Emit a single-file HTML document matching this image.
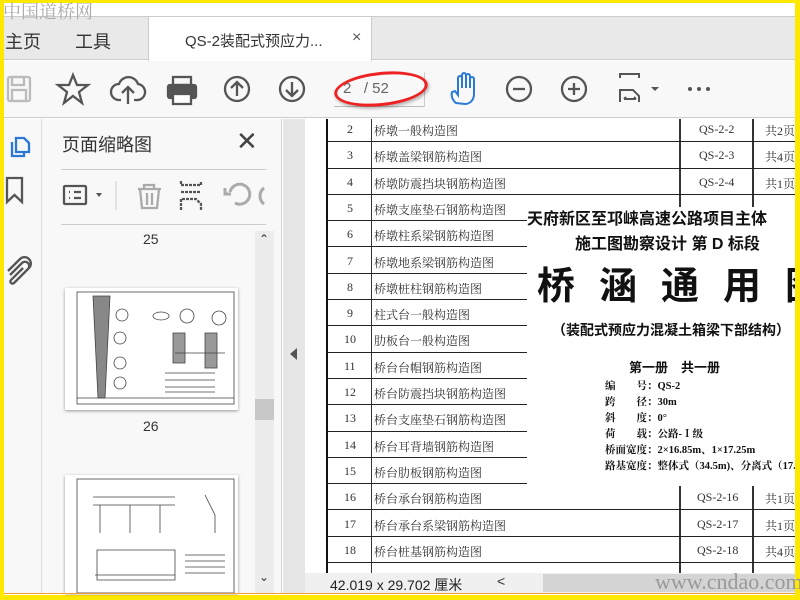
<!DOCTYPE html>
<html><head><meta charset="utf-8"><style>
*{margin:0;padding:0;box-sizing:border-box}
body{width:800px;height:600px;overflow:hidden;background:#ffe800;position:relative;font-family:"Liberation Sans","Noto Sans CJK SC",sans-serif}
.a{position:absolute}
.ico{position:absolute}
.row{position:absolute;left:327px;height:26.3px;width:468px;border-bottom:1.5px solid #222;font-family:"Liberation Serif","Noto Serif CJK SC",serif;font-size:12px;color:#333}
.row span{position:absolute;top:6px}
</style></head><body>
<div class="a" style="left:4px;top:3px;width:791px;height:592px;background:#fff"></div>
<div class="a" style="left:4px;top:16px;width:791px;height:44px;background:#e9e9e9;border-top:1px solid #ccc;border-bottom:1px solid #ccc"></div>
<div class="a" style="left:148px;top:16px;width:224px;height:45px;background:#fff;border-left:1px solid #ccc;border-right:1px solid #ccc;border-top:1px solid #ccc"></div>
<div class="a" style="left:3px;top:1px;font-size:18px;line-height:20px;color:#aaa;letter-spacing:0px;font-family:'Noto Serif CJK SC',serif;z-index:5">中国道桥网</div>
<div class="a" style="left:5px;top:28px;font-size:18px;color:#333">主页</div>
<div class="a" style="left:75px;top:28px;font-size:18px;color:#333">工具</div>
<div class="a" style="left:185px;top:30px;font-size:15px;color:#333">QS-2装配式预应力...</div>
<div class="a" style="left:352px;top:29px;font-size:16px;color:#555">×</div>
<div class="a" style="left:4px;top:61px;width:791px;height:57px;background:#f8f8f8;border-bottom:1px solid #ccc"></div>
<svg class="ico" style="left:0;top:70px" width="800" height="42" fill="none" stroke="#555" stroke-width="2.3">
<rect x="8" y="7" width="22" height="24" rx="2" stroke="#bbb"/><rect x="12" y="7" width="12" height="8" stroke="#bbb"/><rect x="12" y="20" width="14" height="11" stroke="#bbb"/>
<path d="M73 5 L77 15 L88 15 L79 22 L82 33 L73 26 L64 33 L67 22 L58 15 L69 15Z"/>
<path d="M121 30 H119 A8 8 0 0 1 119 14 A10 10 0 0 1 138 14 A8 8 0 0 1 136 30 H134 M128 34 V17 M122 23 L128 17 L134 23"/>
<rect x="168" y="15" width="28" height="13" rx="2" fill="#555"/><rect x="173" y="7" width="18" height="8" fill="none"/><rect x="173" y="24" width="18" height="10" fill="#fff"/>
<circle cx="237" cy="19" r="12"/><path d="M237 26 V12 M231 18 L237 12 L243 18"/>
<circle cx="292" cy="19" r="12"/><path d="M292 12 V26 M286 20 L292 26 L298 20"/>
<circle cx="519" cy="19" r="12"/><path d="M513 19 H525"/>
<circle cx="574" cy="19" r="12"/><path d="M568 19 H580 M574 13 V25"/>
<path d="M620 8 V4 H639 V8 M620 32 V20 H633 L639 26 V32 M624 29 H636 M624 29 L626 27 M636 29 L634 27" stroke-width="2"/>
<path d="M651 17 L659 17 L655 21Z" fill="#555" stroke="none"/>
<circle cx="690" cy="19" r="2" fill="#555" stroke="none"/><circle cx="699" cy="19" r="2" fill="#555" stroke="none"/><circle cx="708" cy="19" r="2" fill="#555" stroke="none"/>
<path d="M456 33 C452 30 451 25 452 22 L455 21 L458 25 V8 A2 2 0 0 1 462 8 V18 V5 A2 2 0 0 1 466 5 V18 V6 A2 2 0 0 1 470 6 V18 V9 A2 2 0 0 1 474 9 V24 C474 30 470 34 465 34Z" stroke="#2a7ad5" stroke-width="2"/>
</svg>
<div class="a" style="left:334px;top:106px;width:90px;height:1px;background:#bbb"></div>
<div class="a" style="left:424px;top:72px;width:1px;height:35px;background:#ccc"></div>
<div class="a" style="left:343px;top:80px;font-size:15px;color:#666">2 &nbsp; / 52</div>
<div class="a" style="left:334px;top:72px;width:94px;height:34px;border:3px solid #e22;border-radius:50%;transform:rotate(-6deg);box-shadow:1px 2px 3px rgba(0,0,0,.3)"></div>
<div class="a" style="left:4px;top:119px;width:38px;height:474px;background:#f8f8f8;border-right:1px solid #ddd"></div>
<svg class="ico" style="left:4px;top:130px" width="38" height="160" fill="none" stroke-width="2.3">
<path d="M8 12 V26 H20 V22 M12 8 H20 L25 13 V22 H12Z" stroke="#2a7ad5"/>
<path d="M3 72 V48 H18 V72 L10.5 65Z" stroke="#555"/>
<path d="M6 145 L18 133 A4 4 0 0 1 24 139 L10 153 A2 2 0 0 1 7 150 L19 138 M4 141 L16 129 A6 6 0 0 1 25 138" stroke="#555"/>
</svg>
<div class="a" style="left:42px;top:119px;width:240px;height:474px;background:#f8f8f8;border-right:1px solid #d5d5d5"></div>
<div class="a" style="left:62px;top:131px;font-size:18px;color:#333">页面缩略图</div>
<div class="a" style="left:236px;top:126px;font-size:26px;color:#444">✕</div>
<div class="a" style="left:61px;top:169px;width:205px;height:1px;background:#ccc"></div>
<div class="a" style="left:61px;top:224px;width:205px;height:1px;background:#ccc"></div>
<svg class="ico" style="left:60px;top:178px" width="210" height="36" fill="none" stroke-width="2.3">
<rect x="4" y="8" width="22" height="18" rx="1" stroke="#555"/><path d="M9 14 H10 M9 20 H10 M14 14 H21 M14 20 H21" stroke="#555"/>
<path d="M36 15 L42 15 L39 19Z" fill="#555"/><path d="M56 3 V32" stroke="#ccc" stroke-width="1"/>
<path d="M78 11 H101 M84 11 V7 H94 V11 M80 11 L82 30 H97 L99 11 M87 15 V27 M92 15 V27" stroke="#aaa"/>
<path d="M121 3 V7 H141 V3 M121 32 V21 H136 L141 26 V32 M121 14 H141" stroke="#555" stroke-dasharray="3 1"/>
<path d="M175 25 A10 10 0 1 0 170 14 M165 10 V16 H171" stroke="#aaa" stroke-width="3"/>
<path d="M204 10 A10 10 0 0 0 204 26" stroke="#aaa" stroke-width="3"/>
</svg>
<div class="a" style="left:143px;top:231px;font-size:14px;color:#333">25</div>
<div class="a" style="left:143px;top:418px;font-size:14px;color:#333">26</div>
<div class="a" style="left:65px;top:288px;width:173px;height:122px;background:#fff;box-shadow:0 1px 3px rgba(0,0,0,.4)">
<svg width="173" height="122" stroke="#444" fill="none" stroke-width=".8"><rect x="12" y="4" width="157" height="112"/><path d="M28 8 L33 110 L40 110 L45 8Z" fill="#888"/><circle cx="55" cy="50" r="6"/><circle cx="55" cy="75" r="6"/><circle cx="55" cy="95" r="6"/><circle cx="57" cy="27" r="6"/><circle cx="122" cy="28" r="7"/><circle cx="154" cy="30" r="7"/><ellipse cx="96" cy="28" rx="8" ry="4"/><rect x="108" y="45" width="12" height="30" fill="#999"/><rect x="140" y="45" width="12" height="35" fill="#999"/><path d="M110 65 H160 M100 85 H150 M100 92 H150 M100 99 H150 M100 104 H150 M12 110 H169"/></svg></div>
<div class="a" style="left:65px;top:475px;width:173px;height:118px;background:#fff;box-shadow:0 1px 3px rgba(0,0,0,.4)">
<svg width="173" height="118" stroke="#444" fill="none" stroke-width=".8"><rect x="12" y="4" width="157" height="114"/><path d="M28 22 H110 M28 30 H110 M35 30 V58 M65 30 V58 M95 30 V58 M32 75 H110 V105 H32Z M140 20 L150 40 V58 M120 80 H160 M120 86 H160 M120 92 H160 M120 98 H160 M30 100 H110"/></svg></div>
<div class="a" style="left:255px;top:231px;width:19px;height:362px;background:#ececec"></div>
<div class="a" style="left:255px;top:399px;width:19px;height:21px;background:#c8c8c8"></div>
<div class="a" style="left:259px;top:232px;font-size:12px;color:#333">⌃</div>
<div class="a" style="left:259px;top:570px;font-size:12px;color:#333">⌄</div>
<div class="a" style="left:283px;top:119px;width:22px;height:474px;background:#e6e6e6"></div>
<div class="a" style="left:290px;top:348px;width:0;height:0;border-right:7px solid #555;border-top:6px solid transparent;border-bottom:6px solid transparent"></div>
<div class="a" style="left:305px;top:119px;width:490px;height:454px;background:#fff"></div>
<div class="a" style="left:326px;top:119px;width:2px;height:454px;background:#111"></div>
<div class="a" style="left:371px;top:119px;width:1px;height:454px;background:#333"></div>
<div class="a" style="left:679px;top:119px;width:1.5px;height:454px;background:#333"></div>
<div class="a" style="left:752px;top:119px;width:1.5px;height:454px;background:#333"></div>
<div class="row" style="top:116px"><span style="left:20px">2</span><span style="left:47px">桥墩一般构造图</span><span style="left:372px">QS-2-2</span><span style="left:438px">共2页</span></div>
<div class="row" style="top:142.3px"><span style="left:20px">3</span><span style="left:47px">桥墩盖梁钢筋构造图</span><span style="left:372px">QS-2-3</span><span style="left:438px">共4页</span></div>
<div class="row" style="top:168.6px"><span style="left:20px">4</span><span style="left:47px">桥墩防震挡块钢筋构造图</span><span style="left:372px">QS-2-4</span><span style="left:438px">共1页</span></div>
<div class="row" style="top:194.9px"><span style="left:20px">5</span><span style="left:47px">桥墩支座垫石钢筋构造图</span></div>
<div class="row" style="top:221.2px"><span style="left:20px">6</span><span style="left:47px">桥墩柱系梁钢筋构造图</span></div>
<div class="row" style="top:247.5px"><span style="left:20px">7</span><span style="left:47px">桥墩地系梁钢筋构造图</span></div>
<div class="row" style="top:273.8px"><span style="left:20px">8</span><span style="left:47px">桥墩桩柱钢筋构造图</span></div>
<div class="row" style="top:300.1px"><span style="left:20px">9</span><span style="left:47px">柱式台一般构造图</span></div>
<div class="row" style="top:326.4px"><span style="left:17px">10</span><span style="left:47px">肋板台一般构造图</span></div>
<div class="row" style="top:352.7px"><span style="left:17px">11</span><span style="left:47px">桥台台帽钢筋构造图</span></div>
<div class="row" style="top:379px"><span style="left:17px">12</span><span style="left:47px">桥台防震挡块钢筋构造图</span></div>
<div class="row" style="top:405.3px"><span style="left:17px">13</span><span style="left:47px">桥台支座垫石钢筋构造图</span></div>
<div class="row" style="top:431.6px"><span style="left:17px">14</span><span style="left:47px">桥台耳背墙钢筋构造图</span></div>
<div class="row" style="top:457.9px"><span style="left:17px">15</span><span style="left:47px">桥台肋板钢筋构造图</span></div>
<div class="row" style="top:484.2px"><span style="left:17px">16</span><span style="left:47px">桥台承台钢筋构造图</span><span style="left:370px">QS-2-16</span><span style="left:438px">共1页</span></div>
<div class="row" style="top:510.5px"><span style="left:17px">17</span><span style="left:47px">桥台承台系梁钢筋构造图</span><span style="left:370px">QS-2-17</span><span style="left:438px">共1页</span></div>
<div class="row" style="top:536.8px"><span style="left:17px">18</span><span style="left:47px">桥台桩基钢筋构造图</span><span style="left:370px">QS-2-18</span><span style="left:438px">共4页</span></div>
<div class="a" style="left:527px;top:207px;width:268px;height:279px;background:#fff;overflow:hidden;white-space:nowrap;color:#111">
<div class="a" style="left:0;top:-2px;font-size:16px;font-weight:bold">天府新区至邛崃高速公路项目主体</div>
<div class="a" style="left:48px;top:23px;font-size:16px;font-weight:bold">施工图勘察设计 第 D 标段</div>
<div class="a" style="left:10px;top:48px;font-size:38px;font-weight:bold;letter-spacing:24px">桥涵通用图</div>
<div class="a" style="left:25px;top:113px;font-size:14px;font-weight:bold">（装配式预应力混凝土箱梁下部结构）</div>
<div class="a" style="left:102px;top:150px;font-size:13px;font-weight:bold">第一册　共一册</div>
<div class="a" style="left:78px;top:172px;font-size:10.5px;font-weight:bold;line-height:16px;font-family:'Liberation Serif','Noto Serif CJK SC',serif">编　　号：QS-2<br>跨　　径：30m<br>斜　　度：0°<br>荷　　载：公路-Ⅰ级<br>桥面宽度：2×16.85m、1×17.25m<br>路基宽度：整体式（34.5m)、分离式（17.</div>
</div>
<div class="a" style="left:305px;top:573px;width:490px;height:20px;background:#f0f0f0"></div>
<div class="a" style="left:330px;top:575px;font-size:14px;color:#222">42.019 x 29.702 厘米</div>
<div class="a" style="left:497px;top:573px;font-size:14px;color:#333">&lt;</div>
<div class="a" style="left:543px;top:574px;width:252px;height:18px;background:#d4d4d4"></div>
<div class="a" style="left:655px;top:569px;font-size:22px;color:#999;font-family:'Liberation Serif',serif">www.cndao.com</div>
<div class="a" style="left:4px;top:593px;width:791px;height:1px;background:#f0a030"></div>
</body></html>
